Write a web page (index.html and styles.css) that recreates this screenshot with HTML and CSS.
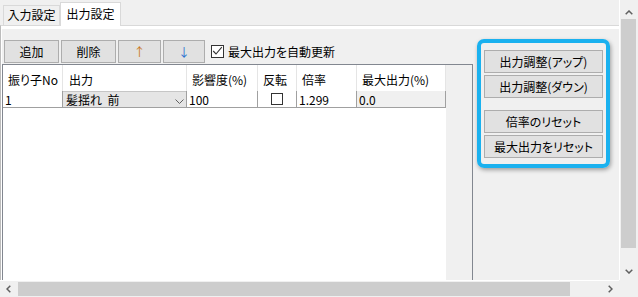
FILE: index.html
```html
<!DOCTYPE html>
<html lang="ja">
<head>
<meta charset="utf-8">
<link rel="stylesheet" href="styles.css">
</head>
<body>
<div class="window">
  <div class="viewport">
    <div class="tabs">
      <div class="tab">入力設定</div>
      <div class="tab active">出力設定</div>
    </div>
    <div class="tabbody">
      <div class="page">
        <div class="leftcol">
          <div class="toolbar">
            <div class="btn w55">追加</div>
            <div class="btn w55">削除</div>
            <div class="btn w43 arrow-up">↑</div>
            <div class="btn w42 arrow-down">↓</div>
            <div class="check">
              <span class="cbox"><svg width="11" height="11" viewBox="0 0 11 11"><polyline points="1.2,5 4,8 9.8,1.2" fill="none" stroke="#333" stroke-width="1.1"/></svg></span>
              <span class="clabel">最大出力を自動更新</span>
            </div>
          </div>
          <div class="gridpanel">
            <div class="grid">
              <div class="row head">
                <div class="cell c1">振り子No</div>
                <div class="cell c2">出力</div>
                <div class="cell c3">影響度(%)</div>
                <div class="cell c4">反転</div>
                <div class="cell c5">倍率</div>
                <div class="cell c6">最大出力(%)</div>
              </div>
              <div class="row data">
                <div class="cell c1">1</div>
                <div class="cell c2">
                  <div class="combo"><span class="ctext">髪揺れ  前</span><svg width="9" height="5" viewBox="0 0 9 5"><polyline points="0.5,0.5 4.5,4.5 8.5,0.5" fill="none" stroke="#606060" stroke-width="1"/></svg></div>
                </div>
                <div class="cell c3">100</div>
                <div class="cell c4"><span class="gbox"></span></div>
                <div class="cell c5">1.299</div>
                <div class="cell c6 ro">0.0</div>
              </div>
            </div>
          </div>
        </div>
        <div class="side">
          <div class="hl">
            <div class="btn sbtn">出力調整(アップ)</div>
            <div class="btn sbtn">出力調整(ダウン)</div>
            <div class="btn sbtn sep">倍率のリセット</div>
            <div class="btn sbtn">最大出力をリセット</div>
          </div>
        </div>
      </div>
    </div>
  </div>
  <div class="vscroll">
    <div class="varrow top"><svg width="8" height="5" viewBox="0 0 8 5"><polyline points="0.7,4.3 4,1 7.3,4.3" fill="none" stroke="#606060" stroke-width="1.5"/></svg></div>
    <div class="vthumb"></div>
    <div class="fill"></div>
    <div class="varrow bottom"><svg width="8" height="5" viewBox="0 0 8 5"><polyline points="0.7,0.7 4,4 7.3,0.7" fill="none" stroke="#606060" stroke-width="1.5"/></svg></div>
  </div>
  <div class="hscroll">
    <div class="harrow"><svg width="5" height="8" viewBox="0 0 5 8"><polyline points="4.3,0.7 1,4 4.3,7.3" fill="none" stroke="#606060" stroke-width="1.5"/></svg></div>
    <div class="hthumb"></div>
    <div class="fill"></div>
    <div class="harrow"><svg width="5" height="8" viewBox="0 0 5 8"><polyline points="0.7,0.7 4,4 0.7,7.3" fill="none" stroke="#606060" stroke-width="1.5"/></svg></div>
  </div>
  <div class="corner"></div>
</div>
</body>
</html>
```

FILE: styles.css
```css
* { box-sizing: border-box; }
html, body { margin: 0; padding: 0; }
body {
  width: 638px;
  height: 297px;
  overflow: hidden;
  background: #f0f0f0;
  font-family: "Noto Sans CJK JP", "Noto Sans", sans-serif;
  font-size: 12px;
  color: #000;
  font-feature-settings: "palt";
}
.window {
  display: grid;
  grid-template-columns: 619px 19px;
  grid-template-rows: 280px 17px;
  width: 638px;
  height: 297px;
}
.viewport { overflow: hidden; background: #f0f0f0; }

/* tabs */
.tabs { height: 25px; display: flex; align-items: flex-end; padding-left: 3px; }
.tab {
  width: 57px;
  height: 20px;
  border: 1px solid #d9d9d9;
  border-bottom: none;
  background: #f0f0f0;
  display: flex;
  align-items: center;
  justify-content: center;
  line-height: 16px;
  padding-bottom: 1px;
}
.tab.active {
  width: 61px;
  height: 24px;
  margin-bottom: -1px;
  background: #fff;
  position: relative;
  z-index: 1;
  padding-bottom: 2px;
}
.tabbody {
  border-top: 1px solid #d9d9d9;
  border-left: 1px solid #bcbcbc;
  background: #fff;
  padding: 3px 0 0 1px;
}
.page { background: #f0f0f0; display: flex; width: 700px; height: 400px; }
.leftcol { width: 471px; flex: none; }

/* toolbar */
.toolbar { display: flex; align-items: center; height: 23px; margin-top: 11px; padding-left: 2px; gap: 2px; }
.btn {
  background: #e1e1e1;
  border: 1px solid #adadad;
  display: flex;
  align-items: center;
  justify-content: center;
  height: 23px;
  line-height: 16px;
  white-space: nowrap;
}
.w55 { width: 55px; }
.w43 { width: 43px; }
.w42 { width: 42px; }
.arrow-up { color: #c9781c; }
.arrow-down { color: #2a6fd0; }
.check { display: flex; align-items: center; margin-left: 4px; }
.cbox {
  width: 13px;
  height: 13px;
  border: 1px solid #333;
  background: #fff;
  display: flex;
}
.clabel { margin-left: 4px; line-height: 16px; }

/* grid */
.gridpanel { margin-top: 1px; border: 1px solid #828790; background: #f0f0f0; height: 300px; }
.grid { width: 443px; height: 100%; background: #fff; }
.row { display: flex; }
.cell { flex: none; white-space: nowrap; }
.head .cell { height: 26px; border-right: 1px solid #e5e5e5; padding: 7px 0 0 5px; line-height: 16px; }
.data .cell { height: 17px; border-right: 1px solid #a0a0a0; border-bottom: 1px solid #a0a0a0; padding: 1px 0 0 2px; line-height: 15px; }
.c1 { width: 60px; }
.c2 { width: 124px; }
.c3 { width: 71px; }
.c4 { width: 39px; }
.c5 { width: 60px; }
.c6 { width: 89px; }
.head .c2 { padding-left: 6px; }
.data .c2 { padding: 0; }
.data .c4 { display: flex; justify-content: center; align-items: center; padding: 0; }
.data .ro { background: #f0f0f0; }
.combo {
  height: 16px;
  background: #e5e5e5;
  border-top: 1px solid #c6c6c6;
  display: flex;
  align-items: center;
  justify-content: space-between;
  padding: 0 2px 0 3px;
  line-height: 15px;
}
.ctext { white-space: pre; }
.combo svg { margin-top: 3px; }
.gbox { width: 12px; height: 12px; border: 1px solid #333; background: #fff; }

/* side panel */
.side { flex: none; width: 146px; padding: 10px 0 0 4px; }
.hl {
  width: 133px;
  border: 4px solid #1ab1ef;
  border-radius: 7px;
  padding: 7px 3px 6px;
  display: flex;
  flex-direction: column;
  gap: 2px;
  box-shadow: 1px 2px 4px rgba(0, 0, 0, 0.35);
}
.sbtn { width: 119px; }
.sep { margin-top: 10px; }

/* scrollbars */
.vscroll { border-left: 1px solid #fff; background: #f0f0f0; display: flex; flex-direction: column; }
.varrow { display: flex; justify-content: center; }
.varrow.top { height: 19px; padding-top: 10px; }
.varrow.bottom { height: 17px; padding-top: 6px; }
.vthumb { height: 229px; margin: 0 2px 0 1px; background: #cdcdcd; }
.fill { flex: 1; }
.hscroll { border-top: 1px solid #fff; background: #f0f0f0; display: flex; }
.harrow { width: 17px; display: flex; align-items: center; justify-content: center; }
.hthumb { width: 552px; margin: 1px 0 1px 1px; background: #cdcdcd; }
.corner { background: #f0f0f0; }
```
